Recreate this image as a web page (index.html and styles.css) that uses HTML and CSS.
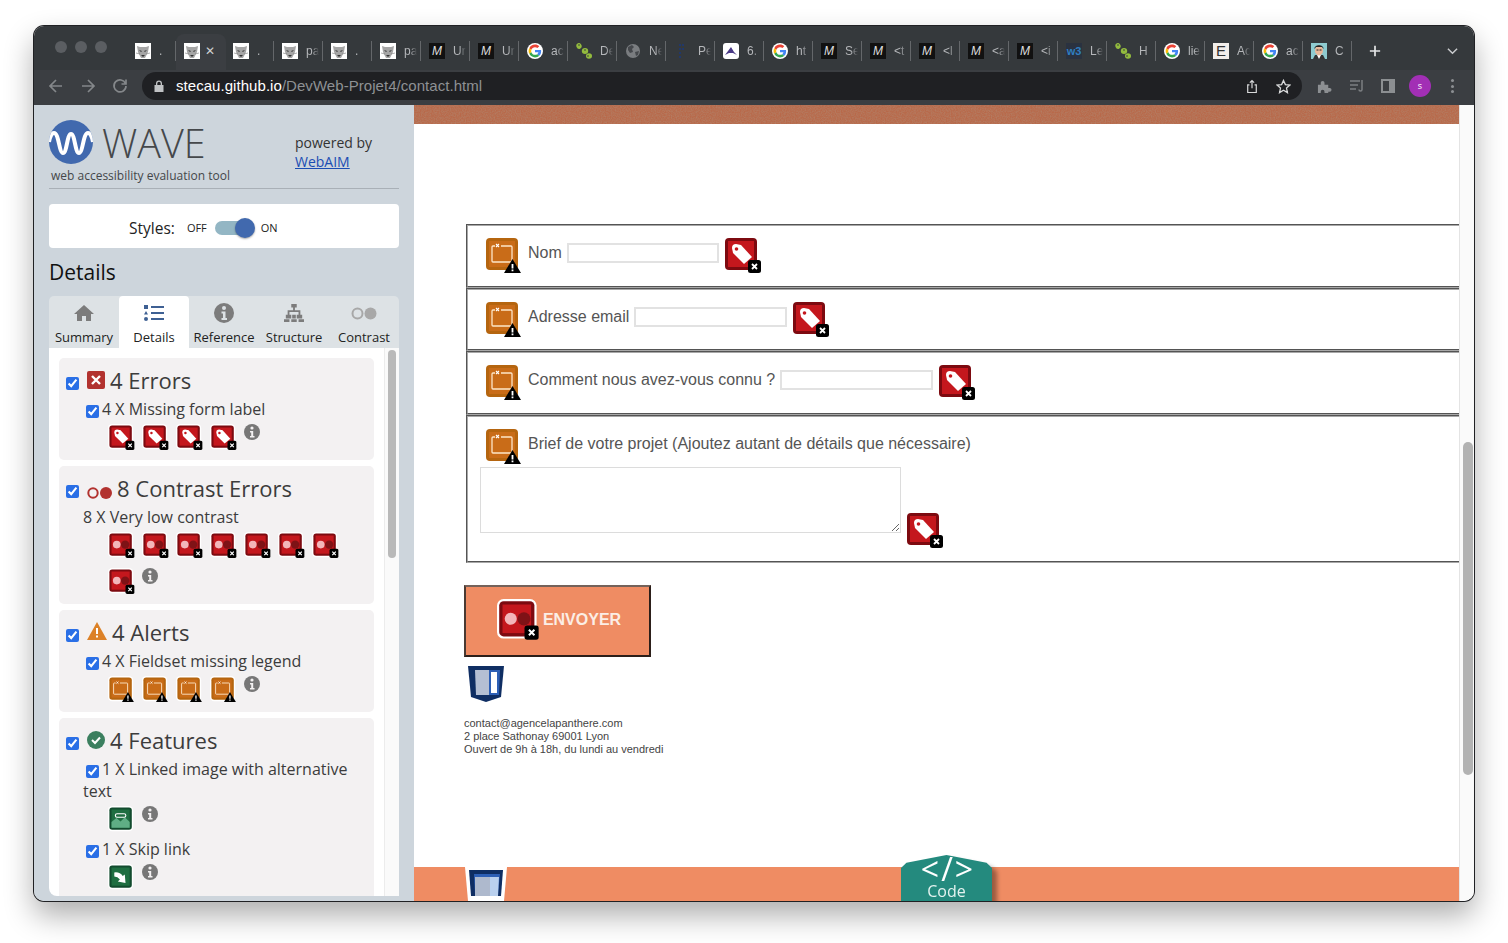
FILE: index.html
```html
<!DOCTYPE html>
<html lang="en">

<head>
    <meta charset="UTF-8">
    <title>stecau.github.io/DevWeb-Projet4/contact.html</title>
    <link rel="stylesheet" href="styles.css">
</head>

<body>
    <svg class="sprites" aria-hidden="true">
        <symbol id="fav-panther" viewBox="0 0 16 16">
            <rect width="16" height="16" fill="#fff" />
            <path d="M2 3l3 1h6l3-1-1 6-2 4-1 2H6l-1-2-2-4z" fill="#a5a5a5" />
            <path d="M4 7l3 1-1 1zM12 7L9 8l1 1zM6 12h4l-2 2z" fill="#333" />
            <path d="M1 10l4 1M15 10l-4 1" stroke="#777" stroke-width=".6" />
        </symbol>
        <symbol id="fav-google" viewBox="-6 -6 60 60">
            <circle cx="24" cy="24" r="30" fill="#fff" />
            <path fill="#EA4335" d="M24 9.5c3.54 0 6.71 1.22 9.21 3.6l6.85-6.85C35.9 2.38 30.47 0 24 0 14.62 0 6.51 5.38 2.56 13.22l7.98 6.19C12.43 13.72 17.74 9.5 24 9.5z" />
            <path fill="#4285F4" d="M46.98 24.55c0-1.57-.15-3.09-.38-4.55H24v9.02h12.94c-.58 2.96-2.26 5.48-4.78 7.18l7.73 6c4.51-4.18 7.09-10.36 7.09-17.65z" />
            <path fill="#FBBC05" d="M10.53 28.59c-.48-1.45-.76-2.99-.76-4.59s.27-3.14.76-4.59l-7.98-6.19C.92 16.46 0 20.12 0 24c0 3.88.92 7.54 2.56 10.78l7.97-6.19z" />
            <path fill="#34A853" d="M24 48c6.48 0 11.93-2.13 15.89-5.81l-7.73-6c-2.15 1.45-4.92 2.3-8.16 2.3-6.26 0-11.57-4.22-13.47-9.91l-7.98 6.19C6.51 42.62 14.62 48 24 48z" />
        </symbol>
        <symbol id="fav-leaf" viewBox="0 0 16 16">
            <g fill="#93bb3e">
                <ellipse cx="3" cy="3" rx="2.6" ry="3" transform="rotate(-20 3 3)" />
                <ellipse cx="9" cy="8" rx="3.200" ry="3" />
                <ellipse cx="13" cy="13" rx="3" ry="2.800" />
            </g>
            <circle cx="3" cy="2" r=".8" fill="#35383c" />
            <circle cx="9" cy="7" r=".8" fill="#35383c" />
            <circle cx="12" cy="13" r=".8" fill="#35383c" />
        </symbol>
        <symbol id="fav-globe" viewBox="0 0 16 16">
            <circle cx="8" cy="8" r="7" fill="#7a7d80" />
            <path d="M3 4l4-2 2 2-2 2 1 3-3 1-2-3zM10 9l4-1-1 4-2 1z" fill="#45484c" />
        </symbol>
        <symbol id="fav-dots" viewBox="0 0 16 16">
            <path d="M5 1h2v2H5zM8 1h2v2H8zM5 5h2v2H5zM8 5h2v2H8zM5 9h2v2H5zM5 13h2v2H5z" fill="#21386a" />
        </symbol>
        <symbol id="fav-peak" viewBox="0 0 16 16">
            <rect width="16" height="16" rx="3" fill="#fff" />
            <path d="M2 12L8 4l3 5 3 3-4-2H6z" fill="#4a3a86" />
        </symbol>
        <symbol id="fav-face" viewBox="0 0 16 16">
            <rect width="16" height="16" fill="#8ecbd0" />
            <path d="M2 16l2-4h8l2 4z" fill="#333" />
            <path d="M6 12h4l-2 4z" fill="#fff" />
            <ellipse cx="8" cy="7.5" rx="4" ry="5" fill="#e8b89a" />
            <path d="M3.500 6C3 1 13 1 12.500 6L11 4H5z" fill="#222" />
            <path d="M5.500 7h2M8.500 7h2" stroke="#222" stroke-width="1" />
        </symbol>

        <symbol id="badge-x" viewBox="0 0 36 36">
            <rect x="23" y="22" width="13" height="13" rx="2.500" fill="#000" />
            <path d="M27 26l5 5M32 26l-5 5" stroke="#fff" stroke-width="1.800" />
        </symbol>
        <symbol id="i-tag" viewBox="-2 -2 40 40">
            <rect x="-2" y="-2" width="36" height="36" rx="6" fill="#fff" />
            <rect width="32" height="32" rx="4" fill="#7d0a10" />
            <rect x="3" y="3" width="26" height="26" fill="#c4171d" />
            <path d="M7 10q0-4 4-4l5 1 11 12-8 7L8 15z" fill="#fff" />
            <circle cx="11.500" cy="11" r="1.800" fill="#c4171d" />
            <use href="#badge-x" width="36" height="36" />
        </symbol>
        <symbol id="i-contrast" viewBox="-2 -2 40 40">
            <rect x="-2" y="-2" width="36" height="36" rx="6" fill="#fff" />
            <rect width="32" height="32" rx="4" fill="#7d0a10" />
            <rect x="3" y="3" width="26" height="26" fill="#c4171d" />
            <circle cx="22.500" cy="16" r="6" fill="#7f1216" />
            <circle cx="10.500" cy="16" r="5.500" fill="#f3b6ba" />
            <use href="#badge-x" width="36" height="36" />
        </symbol>
        <symbol id="i-fieldset" viewBox="-2 -2 40 40">
            <rect x="-2" y="-2" width="36" height="36" rx="6" fill="#fff" />
            <rect width="32" height="32" rx="4" fill="#b5650f" />
            <rect x="3" y="3" width="26" height="26" fill="#c96c18" />
            <path d="M9 8H7q-1 0-1 1v14q0 1 1 1h18q1 0 1-1V9q0-1-1-1H15" fill="none" stroke="#fde6c8" stroke-width="1.300" />
            <path d="M10 6l3 3M13 6l-3 3" stroke="#fff" stroke-width="1.100" />
            <path d="M26.500 21L35 35H18z" fill="#000" />
            <path d="M26.500 26v4.500M26.500 31.500v1.800" stroke="#fff" stroke-width="1.800" />
        </symbol>
        <symbol id="i-linked" viewBox="-2 -2 40 40">
            <rect x="-2" y="-2" width="36" height="36" rx="6" fill="#fff" />
            <rect width="32" height="32" rx="4" fill="#124b2e" />
            <rect x="3" y="3" width="26" height="26" fill="#1f6e41" />
            <path d="M3 29V21l7-6 6 5 6-6 7 7v8z" fill="#5fae85" />
            <path d="M11 9h10a2.500 2.500 0 0 1 0 5H11a2.500 2.500 0 0 1 0-5z" fill="none" stroke="#fff" stroke-width="1.600" />
        </symbol>
        <symbol id="i-skip" viewBox="-2 -2 40 40">
            <rect x="-2" y="-2" width="36" height="36" rx="6" fill="#fff" />
            <rect width="32" height="32" rx="4" fill="#124b2e" />
            <rect x="3" y="3" width="26" height="26" fill="#1f6e41" />
            <path d="M7 10q8-1 12 5l3-2 1 12-11-2 3-3q-3-4-8-4z" fill="#fff" />
        </symbol>
        <symbol id="i-info" viewBox="0 0 16 16">
            <circle cx="8" cy="8" r="8" fill="#777" />
            <circle cx="8" cy="4" r="1.600" fill="#f3f1f2" />
            <path d="M6 7h3.200v5H10.500v1.400H6V12h1.200V8.400H6z" fill="#f3f1f2" />
        </symbol>
        <symbol id="shield" viewBox="0 0 36 36">
            <path d="M0 0h36l-3 31-15 5-15-5z" fill="#0f2e63" />
            <path d="M21 4h11l-1 25H21z" fill="#2d5fb5" />
            <path d="M7 4h14v25H8z" fill="#b4bfd3" />
            <path d="M23 6h6v21h-6z" fill="#fff" />
        </symbol>
    </svg>

    <div class="window">
        <div class="tabstrip">
            <div class="lights"><i></i><i></i><i></i></div>
            <div class="tab"><svg class="fav"><use href="#fav-panther" /></svg><span class="tab-title">.</span></div>
            <div class="tab active"><svg class="fav"><use href="#fav-panther" /></svg><span class="tab-close">&#10005;</span></div>
            <div class="tab"><svg class="fav"><use href="#fav-panther" /></svg><span class="tab-title">.</span></div>
            <div class="tab"><svg class="fav"><use href="#fav-panther" /></svg><span class="tab-title">pa</span></div>
            <div class="tab"><svg class="fav"><use href="#fav-panther" /></svg><span class="tab-title">.</span></div>
            <div class="tab"><svg class="fav"><use href="#fav-panther" /></svg><span class="tab-title">pa</span></div>
            <div class="tab"><span class="fav fav-m">M</span><span class="tab-title">Ur</span></div>
            <div class="tab"><span class="fav fav-m">M</span><span class="tab-title">Ur</span></div>
            <div class="tab"><svg class="fav"><use href="#fav-google" /></svg><span class="tab-title">ac</span></div>
            <div class="tab"><svg class="fav"><use href="#fav-leaf" /></svg><span class="tab-title">De</span></div>
            <div class="tab"><svg class="fav"><use href="#fav-globe" /></svg><span class="tab-title">Ne</span></div>
            <div class="tab"><svg class="fav"><use href="#fav-dots" /></svg><span class="tab-title">Pe</span></div>
            <div class="tab"><svg class="fav"><use href="#fav-peak" /></svg><span class="tab-title">6.</span></div>
            <div class="tab"><svg class="fav"><use href="#fav-google" /></svg><span class="tab-title">ht</span></div>
            <div class="tab"><span class="fav fav-m">M</span><span class="tab-title">Se</span></div>
            <div class="tab"><span class="fav fav-m">M</span><span class="tab-title">&lt;t</span></div>
            <div class="tab"><span class="fav fav-m">M</span><span class="tab-title">&lt;l</span></div>
            <div class="tab"><span class="fav fav-m">M</span><span class="tab-title">&lt;a</span></div>
            <div class="tab"><span class="fav fav-m">M</span><span class="tab-title">&lt;i</span></div>
            <div class="tab"><span class="fav fav-w3">w3</span><span class="tab-title">Le</span></div>
            <div class="tab"><svg class="fav"><use href="#fav-leaf" /></svg><span class="tab-title">H</span></div>
            <div class="tab"><svg class="fav"><use href="#fav-google" /></svg><span class="tab-title">lie</span></div>
            <div class="tab"><span class="fav fav-e">E</span><span class="tab-title">Ac</span></div>
            <div class="tab"><svg class="fav"><use href="#fav-google" /></svg><span class="tab-title">ac</span></div>
            <div class="tab"><svg class="fav"><use href="#fav-face" /></svg><span class="tab-title">C</span></div>
            <svg class="new-tab" viewBox="0 0 14 14"><path d="M7 1v12M1 7h12" /></svg>
            <svg class="tab-menu" viewBox="0 0 12 8"><path d="M1 1.500l5 5 5-5" /></svg>
        </div>

        <div class="toolbar">
            <svg class="tool" viewBox="0 0 16 16"><path d="M14 8H2M8 2L2 8l6 6" /></svg>
            <svg class="tool" viewBox="0 0 16 16"><path d="M2 8h12M8 2l6 6-6 6" /></svg>
            <svg class="tool" viewBox="0 0 16 16"><path d="M13.500 5.500A6 6 0 1 0 14 8M14 1.500v4.500H9.500" /></svg>
            <div class="omnibox">
                <svg class="lock" viewBox="0 0 10 12"><path d="M2 5V3.500a3 3 0 0 1 6 0V5h1.500v7h-9V5zM3.300 5h3.400V3.500a1.700 1.700 0 0 0-3.400 0z" /></svg>
                <span class="url"><b>stecau.github.io</b>/DevWeb-Projet4/contact.html</span>
                <svg class="omni-icon share" viewBox="0 0 14 16"><path d="M4 6H2v9h10V6h-2M7 10V1M4.500 3.500L7 1l2.500 2.500" /></svg>
                <svg class="omni-icon star" viewBox="0 0 16 16"><path d="M8 1.500l2 4.500 4.800.5-3.600 3.200 1 4.800L8 12l-4.200 2.500 1-4.800L1.200 6.500 6 6z" /></svg>
            </div>
            <svg class="ext" viewBox="0 0 16 16"><path d="M1 6h3V4a2 2 0 0 1 4 0v2h4v3.500h1.500a2 2 0 0 1 0 4H12V15H8v-1.500a2 2 0 0 0-4 0V15H1z" /></svg>
            <svg class="media" viewBox="0 0 16 14"><path d="M1 2h10M1 6h8M1 10h6" /><path d="M13 1v9.500a1.500 1.500 0 0 1-3 0" /></svg>
            <svg class="side-panel" viewBox="0 0 14 14"><path d="M0 0h14v14H0zM2 2v10h6V2z" fill-rule="evenodd" /></svg>
            <span class="avatar">S</span>
            <span class="kebab"><i></i><i></i><i></i></span>
        </div>

        <div class="content">
            <aside class="wave">
                <header class="wave-head">
                    <div class="brand">
                        <div class="brand-top">
                            <svg class="wave-logo" viewBox="0 0 44 44">
                                <clipPath id="logo-clip"><circle cx="22" cy="22" r="22" /></clipPath>
                                <circle cx="22" cy="22" r="22" fill="#4169ae" />
                                <path clip-path="url(#logo-clip)" d="M0 22C1 16 3 13 5 13 10 13 10 33 14 33 18 33 18 14 22 14 26 14 26 33 30 33 34 33 34 13 39 13 41 13 43 16 44 22" fill="none" stroke="#fff" stroke-width="4" />
                            </svg>
                            <span class="wave-name">WAVE</span>
                        </div>
                        <div class="tagline">web accessibility evaluation tool</div>
                    </div>
                    <div class="powered">powered by<br><a href="#">WebAIM</a></div>
                </header>

                <div class="styles-box">
                    <span class="styles-label">Styles:</span>
                    <span class="styles-state">OFF</span>
                    <span class="toggle"><i></i></span>
                    <span class="styles-state">ON</span>
                </div>

                <h2 class="wave-title">Details</h2>

                <nav class="wave-tabs">
                    <a class="wave-tab">
                        <svg viewBox="0 0 20 20"><path d="M10 2L0 11h3v7h5v-5h4v5h5v-7h3z" fill="#7c7c7c" /></svg>
                        Summary
                    </a>
                    <a class="wave-tab current">
                        <svg viewBox="0 0 20 20"><path d="M0 2h4v4H0zM7 3h13v2H7zM2 8l2 3.500H0zM7 9h13v2H7zM0 16a2 2 0 1 0 4 0 2 2 0 1 0-4 0zM7 15h13v2H7z" fill="#3e6093" /></svg>
                        Details
                    </a>
                    <a class="wave-tab">
                        <svg viewBox="0 0 20 20"><circle cx="10" cy="10" r="10" fill="#7c7c7c" /><circle cx="10" cy="5" r="2" fill="#dde2e5" /><path d="M7.500 8.500h4v6.500H13v2H7.500v-2H9v-4.500H7.500z" fill="#dde2e5" /></svg>
                        Reference
                    </a>
                    <a class="wave-tab">
                        <svg viewBox="0 0 22 22"><path d="M8 1h6v4h-2v3h6v5h2v4h-6v-4h2v-3h-5v3h2v4H9v-4h2v-3H6v3h2v4H2v-4h2V8h6V5H8z" fill="#7c7c7c" /><path d="M0 18h6v3H0zM8 18h6v3H8zM16 18h6v3h-6z" fill="#7c7c7c" /></svg>
                        Structure
                    </a>
                    <a class="wave-tab">
                        <svg class="wide" viewBox="0 0 26 13"><circle cx="6.500" cy="6.500" r="5" fill="none" stroke="#a8a8a8" stroke-width="2" /><circle cx="19.500" cy="6.500" r="6" fill="#a8a8a8" /></svg>
                        Contrast
                    </a>
                </nav>

                <div class="results">
                    <section class="panel">
                        <h3 class="panel-head">
                            <input type="checkbox" checked>
                            <svg class="head-icon" viewBox="0 0 18 18"><rect width="18" height="18" rx="2" fill="#b2322f" /><path d="M5 5l8 8M13 5l-8 8" stroke="#fff" stroke-width="2.400" /></svg>
                            4 Errors
                        </h3>
                        <p class="item"><input type="checkbox" checked>4 X Missing form label</p>
                        <div class="icons">
                            <svg class="ic"><use href="#i-tag" /></svg>
                            <svg class="ic"><use href="#i-tag" /></svg>
                            <svg class="ic"><use href="#i-tag" /></svg>
                            <svg class="ic"><use href="#i-tag" /></svg>
                            <svg class="info"><use href="#i-info" /></svg>
                        </div>
                    </section>

                    <section class="panel">
                        <h3 class="panel-head">
                            <input type="checkbox" checked>
                            <svg class="head-icon contrast" viewBox="0 0 25 12"><circle cx="6" cy="6" r="4.700" fill="none" stroke="#b2322f" stroke-width="2" /><circle cx="19" cy="6" r="6" fill="#b2322f" /></svg>
                            8 Contrast Errors
                        </h3>
                        <p class="item">8 X Very low contrast</p>
                        <div class="icons">
                            <svg class="ic"><use href="#i-contrast" /></svg>
                            <svg class="ic"><use href="#i-contrast" /></svg>
                            <svg class="ic"><use href="#i-contrast" /></svg>
                            <svg class="ic"><use href="#i-contrast" /></svg>
                            <svg class="ic"><use href="#i-contrast" /></svg>
                            <svg class="ic"><use href="#i-contrast" /></svg>
                            <svg class="ic"><use href="#i-contrast" /></svg>
                            <svg class="ic"><use href="#i-contrast" /></svg>
                            <svg class="info"><use href="#i-info" /></svg>
                        </div>
                    </section>

                    <section class="panel">
                        <h3 class="panel-head">
                            <input type="checkbox" checked>
                            <svg class="head-icon alert" viewBox="0 0 20 18"><path d="M10 0l10 18H0z" fill="#dc8127" /><path d="M10 6v6M10 13.500v2" stroke="#fff" stroke-width="2" /></svg>
                            4 Alerts
                        </h3>
                        <p class="item"><input type="checkbox" checked>4 X Fieldset missing legend</p>
                        <div class="icons">
                            <svg class="ic"><use href="#i-fieldset" /></svg>
                            <svg class="ic"><use href="#i-fieldset" /></svg>
                            <svg class="ic"><use href="#i-fieldset" /></svg>
                            <svg class="ic"><use href="#i-fieldset" /></svg>
                            <svg class="info"><use href="#i-info" /></svg>
                        </div>
                    </section>

                    <section class="panel">
                        <h3 class="panel-head">
                            <input type="checkbox" checked>
                            <svg class="head-icon" viewBox="0 0 18 18"><circle cx="9" cy="9" r="9" fill="#3b7f5f" /><path d="M5 9l3 3 5-5.500" fill="none" stroke="#fff" stroke-width="2" /></svg>
                            4 Features
                        </h3>
                        <p class="item"><input type="checkbox" checked>1 X Linked image with alternative text</p>
                        <div class="icons">
                            <svg class="ic"><use href="#i-linked" /></svg>
                            <svg class="info"><use href="#i-info" /></svg>
                        </div>
                        <p class="item next"><input type="checkbox" checked>1 X Skip link</p>
                        <div class="icons">
                            <svg class="ic"><use href="#i-skip" /></svg>
                            <svg class="info"><use href="#i-info" /></svg>
                        </div>
                    </section>
                </div>
                <div class="results-scroll"><i></i></div>
            </aside>

            <main class="page">
                <div class="page-band">
                    <svg class="grain">
                        <filter id="grain-noise">
                            <feTurbulence type="fractalNoise" baseFrequency="0.8" numOctaves="2" />
                            <feColorMatrix values="0 0 0 0 0.45  0 0 0 0 0.22  0 0 0 0 0.14  0 0 0 1.4 -0.4" />
                        </filter>
                        <rect width="100%" height="100%" filter="url(#grain-noise)" />
                    </svg>
                </div>

                <form class="contact" onsubmit="return false;">
                    <fieldset class="field">
                        <svg class="ic"><use href="#i-fieldset" /></svg>
                        <label for="nom">Nom</label>
                        <input type="text" id="nom">
                        <svg class="ic"><use href="#i-tag" /></svg>
                    </fieldset>
                    <fieldset class="field">
                        <svg class="ic"><use href="#i-fieldset" /></svg>
                        <label for="email">Adresse email</label>
                        <input type="text" id="email">
                        <svg class="ic"><use href="#i-tag" /></svg>
                    </fieldset>
                    <fieldset class="field">
                        <svg class="ic"><use href="#i-fieldset" /></svg>
                        <label for="connu">Comment nous avez-vous connu ?</label>
                        <input type="text" id="connu">
                        <svg class="ic"><use href="#i-tag" /></svg>
                    </fieldset>
                    <fieldset class="field field-brief">
                        <div class="brief-top">
                            <svg class="ic"><use href="#i-fieldset" /></svg>
                            <label for="brief">Brief de votre projet (Ajoutez autant de détails que nécessaire)</label>
                        </div>
                        <div class="brief-bottom">
                            <textarea id="brief"></textarea>
                            <svg class="ic"><use href="#i-tag" /></svg>
                        </div>
                    </fieldset>
                    <button type="submit" class="send">
                        <svg class="ic"><use href="#i-contrast" /></svg>
                        <span class="send-text">ENVOYER</span>
                    </button>
                </form>

                <svg class="page-logo"><use href="#shield" /></svg>
                <address class="contact-info">
                    contact@agencelapanthere.com<br>
                    2 place Sathonay 69001 Lyon<br>
                    Ouvert de 9h à 18h, du lundi au vendredi
                </address>

                <footer class="page-foot">
                    <svg class="foot-logo" viewBox="0 0 42 34">
                        <path d="M0 0h42l-3 34H3z" fill="#fff" />
                        <path d="M4 3h34l-2 26H6z" fill="#0f2e63" />
                        <path d="M9 7h26l-2 20H10z" fill="#2d5fb5" />
                        <path d="M10 10h15v19H10z" fill="#aeb9cd" />
                        <path d="M25 10h9l-1 19h-8z" fill="#b9d0ee" />
                        <path d="M9 30h24v3H9z" fill="#fff" />
                    </svg>
                    <div class="code-tab">
                        <div class="code-shape">
                            <span class="code-mark">&lt;/&gt;</span>
                            <span class="code-text">Code</span>
                        </div>
                    </div>
                </footer>
            </main>

            <div class="page-scroll"><i></i></div>
        </div>
    </div>
</body>

</html>
```

FILE: styles.css
```css
* {
    box-sizing: border-box;
}

html,
body {
    height: 100%;
}

body {
    margin: 0;
    padding: 26px 34px 42px;
    background-color: #fff;
    overflow: hidden;
    font-family: "Liberation Sans", Arial, sans-serif;
}

.sprites {
    display: none;
}

.window {
    height: 875px;
    display: flex;
    flex-direction: column;
    border-radius: 10px;
    overflow: hidden;
    box-shadow: 0 0 0 1px #202124, 0 14px 30px rgba(0, 0, 0, 0.33);
}

/* browser chrome */

.tabstrip {
    height: 44px;
    display: flex;
    align-items: flex-end;
    background-color: #35393c;
    flex-shrink: 0;
}

.lights {
    width: 93px;
    height: 12px;
    padding: 0 0 0 21px;
    display: flex;
    gap: 8px;
    margin-bottom: 17px;
    flex-shrink: 0;
}

.lights i {
    width: 12px;
    height: 12px;
    border-radius: 50%;
    background-color: #5b5e62;
}

.tab {
    width: 49px;
    height: 36px;
    padding: 0 0 2px 8px;
    display: flex;
    align-items: center;
    position: relative;
    color: #b5b7ba;
    font-size: 12px;
}

.tab::after {
    content: "";
    position: absolute;
    right: 0;
    top: 7px;
    height: 20px;
    width: 1px;
    background-color: #64676a;
}

.tab.active {
    background-color: #3b3e42;
    border-radius: 8px 8px 0 0;
    width: 50px;
    margin-right: -1px;
}

.tab.active::after {
    display: none;
}

.fav {
    width: 16px;
    height: 16px;
    flex-shrink: 0;
}

.fav-m {
    background-color: #111;
    color: #ddd;
    font: italic 12px/16px "Liberation Sans", sans-serif;
    text-align: center;
}

.fav-w3 {
    background-color: #2a3240;
    color: #2f7fc0;
    font: bold 11px/16px "Liberation Sans", sans-serif;
    text-align: center;
}

.fav-e {
    background-color: #f2eeea;
    color: #333;
    font: 15px/16px "Liberation Sans", sans-serif;
    text-align: center;
}

.tab-title {
    margin-left: 8px;
    width: 17px;
    white-space: nowrap;
    -webkit-mask-image: linear-gradient(to right, #000 6px, transparent 13px);
    mask-image: linear-gradient(to right, #000 6px, transparent 13px);
}

.tab-close {
    margin-left: 5px;
    font-size: 12px;
    color: #cfd1d3;
}

.new-tab {
    width: 12px;
    height: 12px;
    margin: 0 0 13px 17px;
    fill: none;
    stroke: #e4e5e6;
    stroke-width: 2;
}

.tab-menu {
    width: 11px;
    height: 8px;
    margin: 0 0 15px 66px;
    fill: none;
    stroke: #c8cacc;
    stroke-width: 1.6;
}

.toolbar {
    height: 35px;
    padding: 2px 0 5px 14px;
    display: flex;
    align-items: center;
    background-color: #3b3e42;
    flex-shrink: 0;
}

.tool {
    width: 16px;
    height: 16px;
    margin-right: 16px;
    fill: none;
    stroke: #84878a;
    stroke-width: 1.7;
}

.omnibox {
    width: 1160px;
    height: 28px;
    margin-left: -2px;
    padding: 0 11px 0 12px;
    display: flex;
    align-items: center;
    background-color: #1f2023;
    border-radius: 14px;
}

.lock {
    width: 10px;
    height: 12px;
    fill: #c0c2c4;
}

.url {
    margin: 0 0 1px 12px;
    font-size: 15px;
    letter-spacing: 0.05px;
    color: #8e9194;
}

.url b {
    font-weight: 400;
    color: #fff;
}

.omni-icon {
    fill: none;
    stroke: #d8d9da;
    stroke-width: 1.4;
}

.share {
    width: 12px;
    height: 15px;
    margin-left: auto;
}

.star {
    width: 15px;
    height: 15px;
    margin-left: 18px;
}

.ext {
    width: 15px;
    height: 15px;
    margin-left: 15px;
    fill: #8c8f92;
}

.media {
    width: 16px;
    height: 14px;
    margin-left: 17px;
    fill: none;
    stroke: #7c7f82;
    stroke-width: 1.5;
}

.side-panel {
    width: 14px;
    height: 14px;
    margin-left: 16px;
    fill: #8c8f92;
}

.avatar {
    width: 22px;
    height: 22px;
    margin-left: 14px;
    border-radius: 50%;
    background-color: #a22fb5;
    color: #fff;
    font: 9px/22px "Open Sans", sans-serif;
    text-align: center;
    text-transform: lowercase;
}

.kebab {
    margin-left: 20px;
    display: flex;
    flex-direction: column;
    gap: 2.5px;
}

.kebab i {
    width: 3px;
    height: 3px;
    border-radius: 50%;
    background-color: #8c8f92;
}

.content {
    flex: 1;
    display: flex;
    min-height: 0;
}

/* wave sidebar */

.wave {
    width: 380px;
    flex-shrink: 0;
    padding: 0 15px 5px;
    display: flex;
    flex-direction: column;
    position: relative;
    background-color: #cdd5dc;
    font-family: "Open Sans", sans-serif;
    color: #333;
}

.wave-head {
    height: 84px;
    padding-top: 15px;
    display: flex;
    border-bottom: 1px solid #a9b0b7;
    flex-shrink: 0;
}

.brand {
    width: 246px;
}

.brand-top {
    display: flex;
    align-items: center;
    height: 44px;
}

.wave-logo {
    width: 44px;
    height: 44px;
}

.wave-name {
    margin: 2px 0 0 9px;
    font-size: 39.5px;
    font-weight: 300;
    color: #45484b;
    line-height: 44px;
}

.tagline {
    margin: 4px 0 0 2px;
    font-size: 12px;
    line-height: 16px;
    color: #44474a;
}

.powered {
    padding-top: 13px;
    font-size: 14px;
    line-height: 19px;
}

.powered a {
    color: #1b4db3;
}

.styles-box {
    height: 44px;
    margin-top: 15px;
    padding: 3px 0 0 80px;
    display: flex;
    align-items: center;
    background-color: #fff;
    border-radius: 4px;
    flex-shrink: 0;
}

.styles-label {
    font-size: 15.5px;
    color: #222;
}

.styles-state {
    margin-left: 12px;
    font-size: 11px;
    color: #222;
}

.toggle {
    width: 34px;
    height: 14px;
    margin: 0 0 0 8px;
    position: relative;
    background-color: #93b6c4;
    border-radius: 7px;
}

.toggle i {
    position: absolute;
    right: -6px;
    top: -3px;
    width: 20px;
    height: 20px;
    border-radius: 50%;
    background-color: #4169ae;
    box-shadow: 0 1px 2px rgba(0, 0, 0, 0.35);
}

.wave-title {
    margin: 9px 0 9px 0;
    font-size: 21px;
    line-height: 30px;
    font-weight: 400;
    color: #111;
}

.wave-tabs {
    height: 52px;
    display: flex;
    background-color: #dde2e5;
    border-radius: 5px 5px 0 0;
    flex-shrink: 0;
}

.wave-tab {
    width: 70px;
    padding-top: 7px;
    display: flex;
    flex-direction: column;
    align-items: center;
    font-size: 13px;
    line-height: 18px;
    color: #222;
    white-space: nowrap;
}

.wave-tab svg {
    width: 20px;
    height: 20px;
    margin-bottom: 5px;
}

.wave-tab svg.wide {
    width: 26px;
    height: 13px;
    margin: 4px 0 8px;
}

.wave-tab.current {
    background-color: #fff;
    border-radius: 4px 4px 0 0;
}

.results {
    flex: 1;
    min-height: 0;
    padding: 10px 25px 0 10px;
    display: flex;
    flex-direction: column;
    gap: 6px;
    overflow: hidden;
    background-color: #fff;
    border-radius: 0 0 0 8px;
}

.panel {
    flex-shrink: 0;
    padding: 8px 20px 8.5px 0;
    background-color: #f3f1f2;
    border-radius: 5px;
}

.panel-head {
    height: 30px;
    margin: 0;
    padding-left: 7px;
    display: flex;
    align-items: flex-start;
    gap: 5px;
    font-size: 22px;
    line-height: 28px;
    font-weight: 400;
    color: #3c3c3c;
}

.panel-head input {
    margin: 11px 3px 0 0;
}

.head-icon {
    width: 18px;
    height: 18px;
    margin-top: 5px;
    flex-shrink: 0;
}

.head-icon.contrast {
    width: 25px;
    height: 12px;
    margin-top: 13px;
}

.head-icon.alert {
    width: 20px;
    height: 18px;
    margin-top: 4px;
}

input[type="checkbox"] {
    width: 13px;
    height: 13px;
    accent-color: #2a6fe6;
    flex-shrink: 0;
}

.item {
    margin: 2px 0 0;
    padding-left: 24px;
    font-size: 16px;
    line-height: 22px;
    color: #3c3c3c;
}

.item input {
    margin: 0 3px 0 3px;
    vertical-align: -3px;
}

.item.next {
    margin-top: 4.5px;
}

.icons {
    width: 250px;
    margin: 3.5px 0 0 48.5px;
    display: flex;
    flex-wrap: wrap;
    gap: 8px 6px;
}

.icons .ic {
    width: 28px;
    height: 28px;
}

.panel:nth-child(2) .icons {
    width: 240px;
}

.info {
    width: 16px;
    height: 16px;
}

.results-scroll {
    position: absolute;
    left: 350px;
    top: 243px;
    bottom: 5px;
    width: 15px;
    padding: 2px 3px 0;
    background-color: #fafafa;
    border-left: 1px solid #ececec;
}

.results-scroll i {
    display: block;
    width: 8px;
    height: 208px;
    background-color: #b9b9b9;
    border-radius: 4px;
}

/* the contact page */

.page {
    width: 1045px;
    flex-shrink: 0;
    display: flex;
    flex-direction: column;
    overflow: hidden;
    background-color: #fff;
    color: #555;
}

.page-band {
    height: 19px;
    flex-shrink: 0;
    background-color: #b8694a;
}

.grain {
    display: block;
    width: 100%;
    height: 19px;
}

.contact {
    margin-top: 100px;
    padding-left: 50px;
}

.field {
    width: 1040px;
    height: 63.67px;
    min-width: 0;
    margin: 0 0 0 2px;
    padding: 10px 0 0 16px;
    display: flex;
    align-items: flex-start;
    border: 2px groove #a8a8a8;
}

.field .ic {
    width: 40px;
    height: 40px;
    flex-shrink: 0;
}

.field label {
    margin: 0 5px 0 4px;
    font-size: 16px;
    line-height: 34px;
}

.field input {
    width: 152.5px;
    height: 20px;
    margin: 7px 4px 0 0;
    background-color: #fff;
    border: 2px solid #e2e2e2;
}

.field-brief {
    height: 148px;
    display: block;
}

.brief-top {
    display: flex;
    height: 40px;
}

.brief-bottom {
    display: flex;
    align-items: flex-start;
    margin-left: -4px;
}

.brief-bottom textarea {
    width: 421px;
    height: 66px;
    margin: 0 4px 0 0;
    background-color: #fff;
    border: 1px solid #dcdcdc;
}

.brief-bottom .ic {
    margin-top: 44px;
}

.send {
    width: 187px;
    height: 72px;
    margin-top: 22px;
    padding: 0 0 0 3px;
    display: flex;
    align-items: center;
    justify-content: center;
    gap: 2px;
    background-color: #ef8c63;
    border: 2px solid;
    border-color: #74625a #2c1f1a #2c1f1a #4a3a33;
    color: #fbeee6;
    font: bold 16px "Liberation Sans", sans-serif;
}

.send .ic {
    width: 44px;
    height: 44px;
}

.send-text {
    margin-bottom: 2px;
}

.page-logo {
    width: 36px;
    height: 36px;
    margin: 9px 0 0 54px;
    flex-shrink: 0;
}

.contact-info {
    margin: 15px 0 0 50px;
    font-style: normal;
    font-size: 11px;
    line-height: 13px;
    color: #444;
}

.page-foot {
    height: 34px;
    margin-top: auto;
    padding-left: 51px;
    position: relative;
    background-color: #ef8c63;
    flex-shrink: 0;
}

.foot-logo {
    display: block;
    width: 42px;
    height: 34px;
}

.code-tab {
    position: absolute;
    left: 487px;
    bottom: 0;
    filter: drop-shadow(5px 4px 2px rgba(0, 0, 0, 0.35));
}

.code-shape {
    width: 91px;
    height: 46px;
    padding: 1px 0 0 3px;
    display: flex;
    flex-direction: column;
    align-items: center;
    background-color: #248a7e;
    color: #fff;
    font-family: "Open Sans", sans-serif;
    clip-path: polygon(0 28%, 6% 17%, 50% 0, 94% 17%, 100% 28%, 100% 100%, 0 100%);
}

.code-mark {
    font-size: 32px;
    line-height: 26px;
    letter-spacing: 2px;
}

.code-text {
    margin-left: -3px;
    font-size: 16px;
    line-height: 18px;
    color: #e3f2ef;
}

.page-scroll {
    width: 15px;
    flex-shrink: 0;
    padding: 337px 2px 0 3px;
    background-color: #fafafa;
    border-left: 1px solid #e4e4e4;
}

.page-scroll i {
    display: block;
    width: 10px;
    height: 333px;
    background-color: #b2b2b2;
    border-radius: 5px;
}
```
